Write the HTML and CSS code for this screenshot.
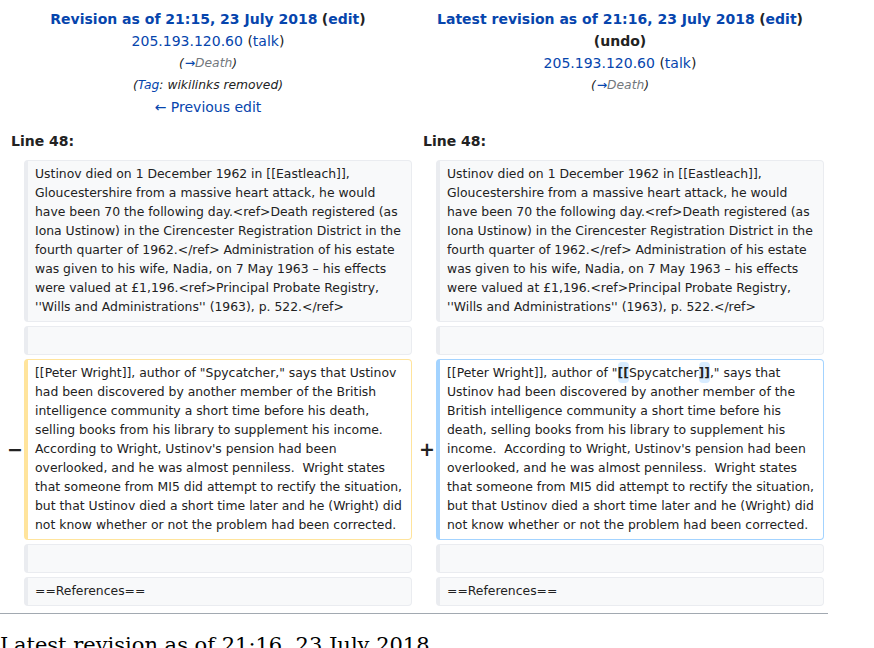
FILE: index.html
```html
<!DOCTYPE html>
<html lang="en">
<head>
<meta charset="utf-8">
<title>Difference between revisions</title>
<link rel="stylesheet" href="styles.css">
</head>
<body>
<table class="diff">
  <colgroup>
    <col class="col-marker">
    <col class="col-content">
    <col class="col-marker">
    <col class="col-content">
  </colgroup>
  <tr>
    <td colspan="2" class="diff-title">
      <div><a class="rev-link" href="#">Revision as of 21:15, 23 July 2018</a> <span class="bold">(<a href="#">edit</a>)</span></div>
      <div><a href="#">205.193.120.60</a> (<a href="#">talk</a>)</div>
      <div class="small italic">(<a class="arrow" href="#">→</a><span class="autocomment">Death</span>)</div>
      <div class="small italic">(<a href="#">Tag</a>: wikilinks removed)</div>
      <div><a href="#">← Previous edit</a></div>
    </td>
    <td colspan="2" class="diff-title">
      <div><a class="rev-link" href="#">Latest revision as of 21:16, 23 July 2018</a> <span class="bold">(<a href="#">edit</a>)</span> <span class="bold">(<a class="plain" href="#">undo</a>)</span></div>
      <div><a href="#">205.193.120.60</a> (<a href="#">talk</a>)</div>
      <div class="small italic">(<a class="arrow" href="#">→</a><span class="autocomment">Death</span>)</div>
    </td>
  </tr>
  <tr>
    <td colspan="2" class="diff-lineno">Line 48:</td>
    <td colspan="2" class="diff-lineno">Line 48:</td>
  </tr>
  <tr>
    <td class="diff-marker"></td>
    <td class="diff-context"><div>Ustinov died on 1 December 1962 in [[Eastleach]], Gloucestershire from a massive heart attack, he would have been 70 the following day.&lt;ref&gt;Death registered (as Iona Ustinow) in the Cirencester Registration District in the fourth quarter of 1962.&lt;/ref&gt; Administration of his estate was given to his wife, Nadia, on 7 May 1963 – his effects were valued at £1,196.&lt;ref&gt;Principal Probate Registry, ''Wills and Administrations'' (1963), p. 522.&lt;/ref&gt;</div></td>
    <td class="diff-marker"></td>
    <td class="diff-context"><div>Ustinov died on 1 December 1962 in [[Eastleach]], Gloucestershire from a massive heart attack, he would have been 70 the following day.&lt;ref&gt;Death registered (as Iona Ustinow) in the Cirencester Registration District in the fourth quarter of 1962.&lt;/ref&gt; Administration of his estate was given to his wife, Nadia, on 7 May 1963 – his effects were valued at £1,196.&lt;ref&gt;Principal Probate Registry, ''Wills and Administrations'' (1963), p. 522.&lt;/ref&gt;</div></td>
  </tr>
  <tr>
    <td class="diff-marker"></td>
    <td class="diff-context"><br></td>
    <td class="diff-marker"></td>
    <td class="diff-context"><br></td>
  </tr>
  <tr>
    <td class="diff-marker"><span class="mark">−</span></td>
    <td class="diff-deletedline"><div>[[Peter Wright]], author of "Spycatcher," says that Ustinov had been discovered by another member of the British intelligence community a short time before his death, selling books from his library to supplement his income.  According to Wright, Ustinov's pension had been overlooked, and he was almost penniless.  Wright states that someone from MI5 did attempt to rectify the situation, but that Ustinov died a short time later and he (Wright) did not know whether or not the problem had been corrected.</div></td>
    <td class="diff-marker"><span class="mark">+</span></td>
    <td class="diff-addedline"><div>[[Peter Wright]], author of "<ins class="diffchange">[[</ins>Spycatcher<ins class="diffchange">]]</ins>," says that Ustinov had been discovered by another member of the British intelligence community a short time before his death, selling books from his library to supplement his income.  According to Wright, Ustinov's pension had been overlooked, and he was almost penniless.  Wright states that someone from MI5 did attempt to rectify the situation, but that Ustinov died a short time later and he (Wright) did not know whether or not the problem had been corrected.</div></td>
  </tr>
  <tr>
    <td class="diff-marker"></td>
    <td class="diff-context"><br></td>
    <td class="diff-marker"></td>
    <td class="diff-context"><br></td>
  </tr>
  <tr>
    <td class="diff-marker"></td>
    <td class="diff-context"><div>==References==</div></td>
    <td class="diff-marker"></td>
    <td class="diff-context"><div>==References==</div></td>
  </tr>
</table>
<hr class="diff-hr">
<h2 class="current-title">Latest revision as of 21:16, 23 July 2018</h2>
</body>
</html>
```
FILE: styles.css
```css
html, body {
  margin: 0;
  padding: 0;
  background: #ffffff;
}

body {
  font-family: "DejaVu Sans", sans-serif;
  font-size: 14px;
  color: #222222;
}

a {
  color: #0645ad;
  text-decoration: none;
}

table.diff {
  width: 828px;
  table-layout: fixed;
  border-collapse: separate;
  border-spacing: 4px;
  margin: 0;
}

.col-marker {
  width: 16px;
}

.col-content {
  width: 388px;
}

.diff-title {
  text-align: center;
  vertical-align: top;
  padding: 4px 7px;
  line-height: 22px;
  color: #222222;
}

.rev-link {
  font-weight: bold;
}

.bold {
  font-weight: bold;
}

.bold a {
  color: #0645ad;
}

.bold a.plain {
  color: #222222;
}

.small {
  font-size: 12.3px;
}

.italic {
  font-style: italic;
}

.arrow {
  padding-left: 1px;
}

.autocomment {
  color: #72777d;
}

.diff-lineno {
  font-weight: bold;
  padding: 4px 7px;
  line-height: 22px;
  color: #222222;
}

.diff-marker {
  text-align: right;
  vertical-align: middle;
  padding: 0;
  font-weight: bold;
  font-size: 19px;
  line-height: 1.2;
  color: #222222;
}

.mark {
  display: inline-block;
  margin-right: -3px;
}

.diff-context,
.diff-deletedline,
.diff-addedline {
  font-size: 12.4px;
  line-height: 19px;
  vertical-align: top;
  white-space: pre-wrap;
  word-wrap: break-word;
  padding: 3px 5px 5px 7px;
  border-style: solid;
  border-width: 1px 1px 1px 4px;
  border-radius: 4px;
  color: #222222;
}

.diff-context {
  background: #f8f9fa;
  border-color: #eaecf0;
}

.diff-deletedline {
  background: #ffffff;
  border-color: #ffe49c;
}

.diff-addedline {
  background: #ffffff;
  border-color: #a3d3ff;
}

ins.diffchange {
  text-decoration: none;
  font-weight: bold;
  background: #d8ecff;
  border-radius: 4px;
  padding: 3px 0;
}

.diff-hr {
  width: 828px;
  margin: 3px 0 0 0;
  border: 0;
  border-top: 1px solid #a2a9b1;
  height: 0;
}

.current-title {
  font-family: "DejaVu Serif", serif;
  font-weight: normal;
  font-size: 21px;
  line-height: normal;
  margin: 19px 0 0 0;
  color: #000000;
}
```
